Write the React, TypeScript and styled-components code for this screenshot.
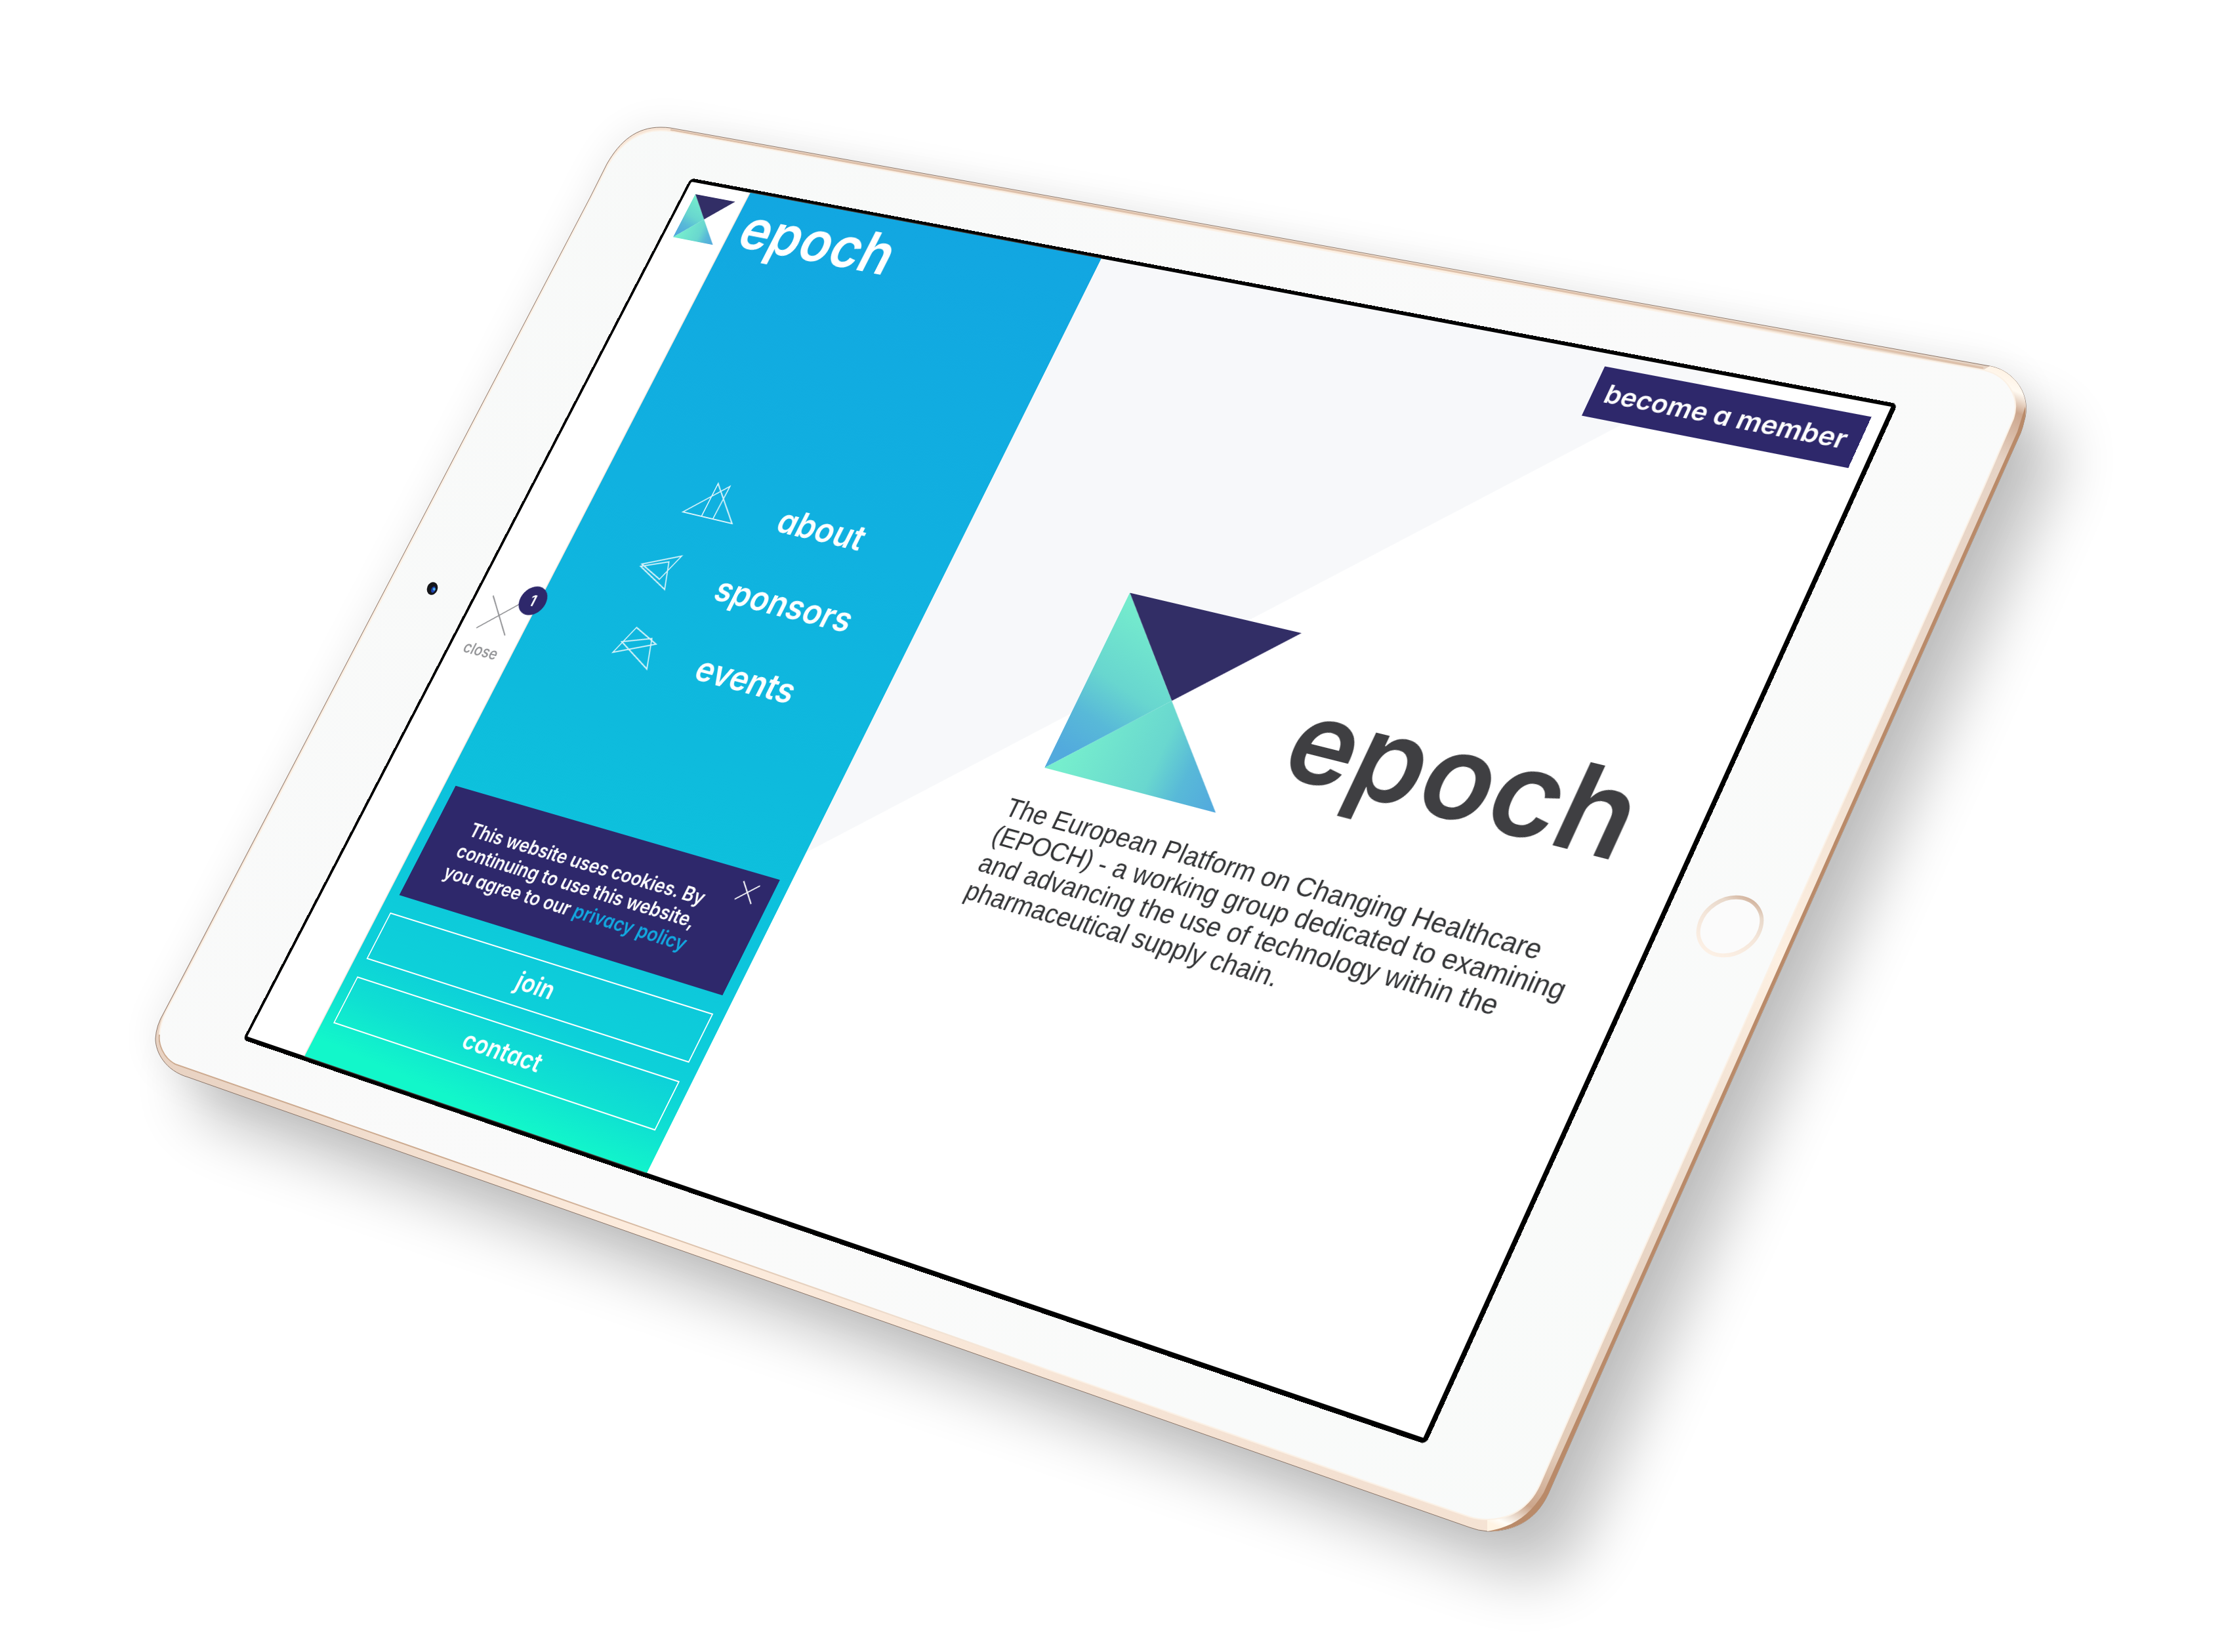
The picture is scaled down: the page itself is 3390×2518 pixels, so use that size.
import React, { useId, useLayoutEffect, useRef, useState } from 'react';
import styled, { createGlobalStyle, css } from 'styled-components';

/* ---------- geometry of the mockup ---------- */

type Point = [number, number];

const STAGE = { width: 3390, height: 2518 };
const SCREEN = { width: 2048, height: 1536 };
const SCREEN_CORNERS: Point[] = [
  [1054, 277],
  [2883, 620],
  [2170, 2192],
  [377, 1580],
];

/** Projects a flat width x height rectangle onto four corners (clockwise from top left). */
function projectOnto(corners: Point[], width: number, height: number) {
  const [[x0, y0], [x1, y1], [x2, y2], [x3, y3]] = corners;
  const dx1 = x1 - x2;
  const dx2 = x3 - x2;
  const dx3 = x0 - x1 + x2 - x3;
  const dy1 = y1 - y2;
  const dy2 = y3 - y2;
  const dy3 = y0 - y1 + y2 - y3;
  const den = dx1 * dy2 - dx2 * dy1;
  const g = (dx3 * dy2 - dx2 * dy3) / den;
  const h = (dx1 * dy3 - dx3 * dy1) / den;
  const m = [
    (x1 - x0 + g * x1) / width, (y1 - y0 + g * y1) / width, 0, g / width,
    (x3 - x0 + h * x3) / height, (y3 - y0 + h * y3) / height, 0, h / height,
    0, 0, 1, 0,
    x0, y0, 0, 1,
  ];
  return `matrix3d(${m.map(n => n.toFixed(10)).join(',')})`;
}

/* ---------- styles ---------- */

const colors = {
  navy: '#2e286b',
  ink: '#3f3f42',
  copy: '#333436',
  sky: '#12a8e0',
  grey: '#8f9093',
};

const brandFont = css`
  font-family: Inter, 'Open Sans', sans-serif;
  font-feature-settings: 'cv11' 1;
`;

const GlobalStyle = createGlobalStyle`
  *, *::before, *::after { box-sizing: border-box; }
  body { margin: 0; background: #fff; }
  h1, p { margin: 0; }
  button { border: 0; background: none; color: inherit; font: inherit; padding: 0; cursor: pointer; }
  a { color: inherit; text-decoration: none; }
`;

const Stage = styled.div`
  position: relative;
  width: 100%;
  aspect-ratio: ${STAGE.width} / ${STAGE.height};
  overflow: hidden;
`;

const DeviceArt = styled.svg`
  display: block;
  width: 100%;
  height: 100%;
`;

const Screen = styled.div`
  position: absolute;
  top: 0;
  left: 0;
  box-sizing: content-box;
  width: ${SCREEN.width}px;
  height: ${SCREEN.height}px;
  display: grid;
  grid-template-columns: 118px 661px 1fr;
  background: #fff;
  border: solid #000;
  border-width: 6px 7px 7px 5px;
  border-radius: 8px;
  transform-origin: 0 0;
`;

const Rail = styled.header`
  position: relative;
  z-index: 1;
  display: grid;
  grid-template-rows: 1fr auto 1fr;
  justify-items: center;
  padding: 20px 0;
`;

const CloseMenu = styled.button`
  && {
    ${brandFont}
    display: flex;
    flex-direction: column;
    align-items: center;
    gap: 18px;
    padding-top: 76px;
    color: ${colors.grey};
    font-size: 26px;
    font-weight: 500;
    line-height: 30px;
  }
`;

const CloseGlyph = styled.span`
  position: relative;
  display: block;
`;

const Badge = styled.span`
  position: absolute;
  right: -42px;
  top: -32px;
  width: 50px;
  height: 50px;
  border-radius: 50%;
  background: ${colors.navy};
  color: #fff;
  font-size: 26px;
  font-weight: 600;
  line-height: 50px;
  text-align: center;
`;

const Sidebar = styled.aside`
  ${brandFont}
  display: flex;
  flex-direction: column;
  padding: 12px 20px 62px;
  color: #fff;
  background: linear-gradient(184deg, #12a6e1 0%, #10b1e0 35%, #0ebadd 58%, #0dc4dc 75%, #0dd0d9 88%, #0fe0d2 93%, #12f7ca 98%);
  box-shadow: -1px 0 2px #e2cfc2;
`;

const Wordmark = styled.span<{ $size: number }>`
  ${brandFont}
  font-size: ${p => p.$size}px;
  line-height: ${p => p.$size}px;
  font-weight: 600;
`;

const Menu = styled.nav`
  display: flex;
  flex-direction: column;
  align-items: center;
  margin-top: 349px;
  padding-left: 8px;
`;

const MenuLink = styled.a`
  display: flex;
  align-items: center;
  gap: 66px;
  font-size: 56px;
  font-weight: 600;
  line-height: 130px;
`;

const MenuGlyph = styled.svg`
  display: block;
  width: 110px;
  height: 130px;
  fill: none;
  stroke: rgba(255, 255, 255, 0.85);
  stroke-width: 2;
`;

const SidebarFoot = styled.div`
  display: flex;
  flex-direction: column;
  gap: 30px;
  margin-top: auto;
`;

const CookieNotice = styled.section`
  display: flex;
  align-items: center;
  justify-content: space-between;
  height: 190px;
  padding: 0 26px 0 50px;
  background: ${colors.navy};
`;

const CookieText = styled.p`
  width: 480px;
  font-size: 31px;
  font-weight: 600;
  line-height: 37px;
  text-align: center;

  a { color: ${colors.sky}; }
`;

const CookieDismiss = styled.button`
  align-self: flex-start;
  margin-top: 16px;
`;

const OutlineLink = styled.a`
  height: 80px;
  border: 2px solid #fff;
  font-size: 40px;
  font-weight: 600;
  line-height: 76px;
  text-align: center;
`;

const Main = styled.main`
  display: grid;
  grid-template-rows: 1fr auto 1fr;
  padding: 0 20px 0 278px;
  background: linear-gradient(135deg, #f7f8fa 716px, #fff 717px);
`;

const MemberButton = styled.button`
  && {
    ${brandFont}
    align-self: start;
    justify-self: end;
    width: 400px;
    height: 80px;
    margin-top: 20px;
    background: ${colors.navy};
    color: #fff;
    font-size: 40px;
    font-weight: 600;
    line-height: 80px;
  }
`;

const Hero = styled.section`
  display: flex;
  flex-direction: column;
  gap: 48px;
  padding-bottom: 4px;
`;

const HeroBrand = styled.h1`
  display: flex;
  align-items: center;
  gap: 60px;
  padding-left: 28px;
  color: ${colors.ink};

  ${Wordmark} { padding-top: 10px; }
`;

const HeroCopy = styled.p`
  max-width: 920px;
  color: ${colors.copy};
  font-family: 'Liberation Sans', Arial, sans-serif;
  font-size: 40px;
  line-height: 45px;
`;

/* ---------- drawings ---------- */

function EpochMark({ size }: { size: number }) {
  const id = useId();
  return (
    <svg width={size} height={size} viewBox="0 0 288 288" aria-hidden="true">
      <defs>
        <linearGradient id={`${id}v`} gradientUnits="userSpaceOnUse" x1="70" y1="20" x2="0" y2="250">
          <stop offset="0" stopColor="#76eecd" />
          <stop offset="0.5" stopColor="#68d6cf" />
          <stop offset="0.75" stopColor="#58b9d8" />
          <stop offset="1" stopColor="#52aadd" />
        </linearGradient>
        <linearGradient id={`${id}h`} gradientUnits="userSpaceOnUse" x1="20" y1="0" x2="288" y2="0">
          <stop offset="0" stopColor="#76eecd" />
          <stop offset="0.54" stopColor="#69d7cf" />
          <stop offset="0.74" stopColor="#58b9d8" />
          <stop offset="1" stopColor="#52a8de" />
        </linearGradient>
      </defs>
      <path d="M0 0H287L143 144Z" fill="#322e66" />
      <path d="M0 0L143 144L0 288Z" fill={`url(#${id}v)`} />
      <path d="M0 288L143 144L287 288Z" fill={`url(#${id}h)`} />
    </svg>
  );
}

function Cross({ size }: { size: number }) {
  return (
    <svg width={size} height={size} viewBox={`0 0 ${size} ${size}`} stroke="currentColor" strokeWidth="2" display="block" aria-hidden="true">
      <path d={`M1 1L${size - 1} ${size - 1}M${size - 1} 1L1 ${size - 1}`} />
    </svg>
  );
}

const BODY_OUTLINE =
  'M283 1480L900 300L925 250C945 215 970 194 1007 194Q1015 194 1022 195L1700 317L2433 450L2850 525L3033 558C3072 565 3098 605 3085 643Q3083 652 3080 660L2460 2050L2360 2277C2340 2320 2305 2334 2267 2334Q2253 2333 2240 2328L2080 2272L620 1759L287 1642C252 1632 237 1604 237 1583Q238 1563 250 1543Z';
const FACE_OUTLINE =
  'M286 1480L902 300L927 251C947 217 975 199 1007 199Q1017 199 1027 201L1700 324L2433 457L2850 534L3023 564C3060 572 3080 605 3069 638L3025 740L2440 2050L2347 2263C2330 2300 2300 2316 2267 2316Q2253 2316 2240 2312L2080 2257L620 1745L267 1622C248 1612 241 1590 243 1577Q244 1560 253 1542Z';

function Tablet() {
  return (
    <DeviceArt viewBox={`0 0 ${STAGE.width} ${STAGE.height}`} aria-hidden="true">
      <defs>
        <filter id="cast" x="-20%" y="-20%" width="140%" height="140%">
          <feGaussianBlur stdDeviation="45" />
        </filter>
        <filter id="halo" x="-20%" y="-20%" width="140%" height="140%">
          <feGaussianBlur stdDeviation="30" />
        </filter>
        <linearGradient id="rim" gradientUnits="userSpaceOnUse" x1="240" y1="1600" x2="3080" y2="600">
          <stop offset="0" stopColor="#e8d2c2" />
          <stop offset="0.2" stopColor="#fdecdd" />
          <stop offset="0.5" stopColor="#f3e0d1" />
          <stop offset="0.75" stopColor="#fdeede" />
          <stop offset="1" stopColor="#e4d1c2" />
        </linearGradient>
        <linearGradient id="side" gradientUnits="userSpaceOnUse" x1="3085" y1="570" x2="2290" y2="2330">
          <stop offset="0" stopColor="#fff0e0" />
          <stop offset="0.015" stopColor="#fffaf2" />
          <stop offset="0.03" stopColor="#cda78e" />
          <stop offset="0.07" stopColor="#e6d3c5" />
          <stop offset="0.3" stopColor="#eedccd" />
          <stop offset="0.5" stopColor="#fdf0e2" />
          <stop offset="0.75" stopColor="#e8d5c5" />
          <stop offset="0.93" stopColor="#e2cbb8" />
          <stop offset="0.975" stopColor="#cca68c" />
          <stop offset="0.995" stopColor="#fffdf8" />
          <stop offset="1" stopColor="#fff4e4" />
        </linearGradient>
        <linearGradient id="face" x1="0" y1="0" x2="1" y2="1">
          <stop offset="0" stopColor="#f7f9f8" />
          <stop offset="0.5" stopColor="#fafafa" />
          <stop offset="1" stopColor="#f8faf9" />
        </linearGradient>
        <linearGradient id="lip" gradientUnits="userSpaceOnUse" x1="243" y1="1600" x2="1600" y2="2090">
          <stop offset="0" stopColor="#cdab91" />
          <stop offset="0.4" stopColor="#cdab91" />
          <stop offset="1" stopColor="#cdab91" stopOpacity="0" />
        </linearGradient>
        <linearGradient id="ring" gradientUnits="userSpaceOnUse" x1="2590" y1="1440" x2="2685" y2="1385">
          <stop offset="0" stopColor="#fdf1e6" />
          <stop offset="0.5" stopColor="#f4e6da" />
          <stop offset="0.8" stopColor="#e8d8ca" />
          <stop offset="1" stopColor="#cfae97" />
        </linearGradient>
      </defs>
      <path d={BODY_OUTLINE} fill="#000" opacity="0.08" filter="url(#halo)" />
      <path d={BODY_OUTLINE} fill="#000" opacity="0.22" filter="url(#cast)" transform="translate(54 72)" />
      <path d={BODY_OUTLINE} fill="url(#rim)" stroke="#8c776a" strokeWidth="1" />
      <path
        d="M3033 558C3072 565 3098 605 3085 643Q3083 652 3080 660L2460 2050L2360 2277C2340 2320 2305 2334 2267 2334L2267 2316L2347 2263L3023 740L3023 564Z"
        fill="url(#side)"
      />
      <path
        d="M3087 620C3088 635 3085 648 3080 660L2460 2050L2360 2277C2340 2320 2305 2334 2267 2334C2305 2328 2332 2310 2353 2275L2454 2050L3075 658Z"
        fill="#b98a69"
      />
      <path d="M1022 198L1700 320L2433 453L2850 529L3023 561" fill="none" stroke="#ddc0aa" strokeWidth="3" />
      <path d={FACE_OUTLINE} fill="url(#face)" stroke="#fbf1e6" strokeWidth="2" />
      <path d="M243 1577C241 1590 248 1612 267 1622L620 1745L1600 2089" fill="none" stroke="url(#lip)" strokeWidth="2" />
      <g transform="rotate(22 659 897)">
        <ellipse cx="659" cy="897" rx="8" ry="10" fill="#15161a" />
        <ellipse cx="661" cy="898" rx="3" ry="5" fill="#1d3fae" />
        <circle cx="662" cy="897" r="2" fill="#49b4e8" />
      </g>
      <ellipse cx="2637" cy="1412" rx="51" ry="41" fill="#fbfbfb" stroke="url(#ring)" strokeWidth="6" transform="rotate(-33 2637 1412)" />
    </DeviceArt>
  );
}

/* ---------- page ---------- */

const menu = [
  { label: 'about', path: 'M4 89L63 31L62 89ZM99 89L40 31L40 89Z' },
  { label: 'sponsors', path: 'M25 57L87 29L69 74ZM25 61L70 43L87 88Z' },
  { label: 'events', path: 'M37 28L85 46L18 76ZM73 39L24 56L91 88Z' },
];

function useStageScale() {
  const ref = useRef<HTMLDivElement>(null);
  const [scale, setScale] = useState(1);
  useLayoutEffect(() => {
    const el = ref.current;
    if (!el) return;
    const update = () => setScale(el.clientWidth / STAGE.width);
    update();
    const observer = new ResizeObserver(update);
    observer.observe(el);
    return () => observer.disconnect();
  }, []);
  return [ref, scale] as const;
}

export default function App() {
  const [stageRef, scale] = useStageScale();
  const corners = SCREEN_CORNERS.map(([x, y]) => [x * scale, y * scale] as Point);
  const projection = projectOnto(corners, SCREEN.width, SCREEN.height);

  return (
    <>
      <GlobalStyle />
      <Stage ref={stageRef}>
        <Tablet />
        <Screen style={{ transform: `${projection} translate(-5px, -6px)` }}>
          <Rail>
            <a href="#home" aria-label="epoch home">
              <EpochMark size={80} />
            </a>
            <CloseMenu type="button">
              <CloseGlyph>
                <Cross size={60} />
                <Badge>1</Badge>
              </CloseGlyph>
              close
            </CloseMenu>
          </Rail>
          <Sidebar>
            <Wordmark $size={96}>epoch</Wordmark>
            <Menu>
              {menu.map(item => (
                <MenuLink key={item.label} href={`#${item.label}`}>
                  <MenuGlyph viewBox="0 0 110 130" aria-hidden="true">
                    <path d={item.path} />
                  </MenuGlyph>
                  {item.label}
                </MenuLink>
              ))}
            </Menu>
            <SidebarFoot>
              <CookieNotice aria-label="Cookies">
                <CookieText>
                  This website uses cookies. By continuing to use this website, you agree to our{' '}
                  <a href="#privacy">privacy policy</a>
                </CookieText>
                <CookieDismiss type="button" aria-label="Dismiss">
                  <Cross size={32} />
                </CookieDismiss>
              </CookieNotice>
              <OutlineLink href="#join">join</OutlineLink>
              <OutlineLink href="#contact">contact</OutlineLink>
            </SidebarFoot>
          </Sidebar>
          <Main>
            <MemberButton type="button">become a member</MemberButton>
            <Hero>
              <HeroBrand>
                <EpochMark size={288} />
                <Wordmark $size={174}>epoch</Wordmark>
              </HeroBrand>
              <HeroCopy>
                The European Platform on Changing Healthcare (EPOCH) - a working group dedicated to examining and
                advancing the use of technology within the pharmaceutical supply chain.
              </HeroCopy>
            </Hero>
          </Main>
        </Screen>
      </Stage>
    </>
  );
}
